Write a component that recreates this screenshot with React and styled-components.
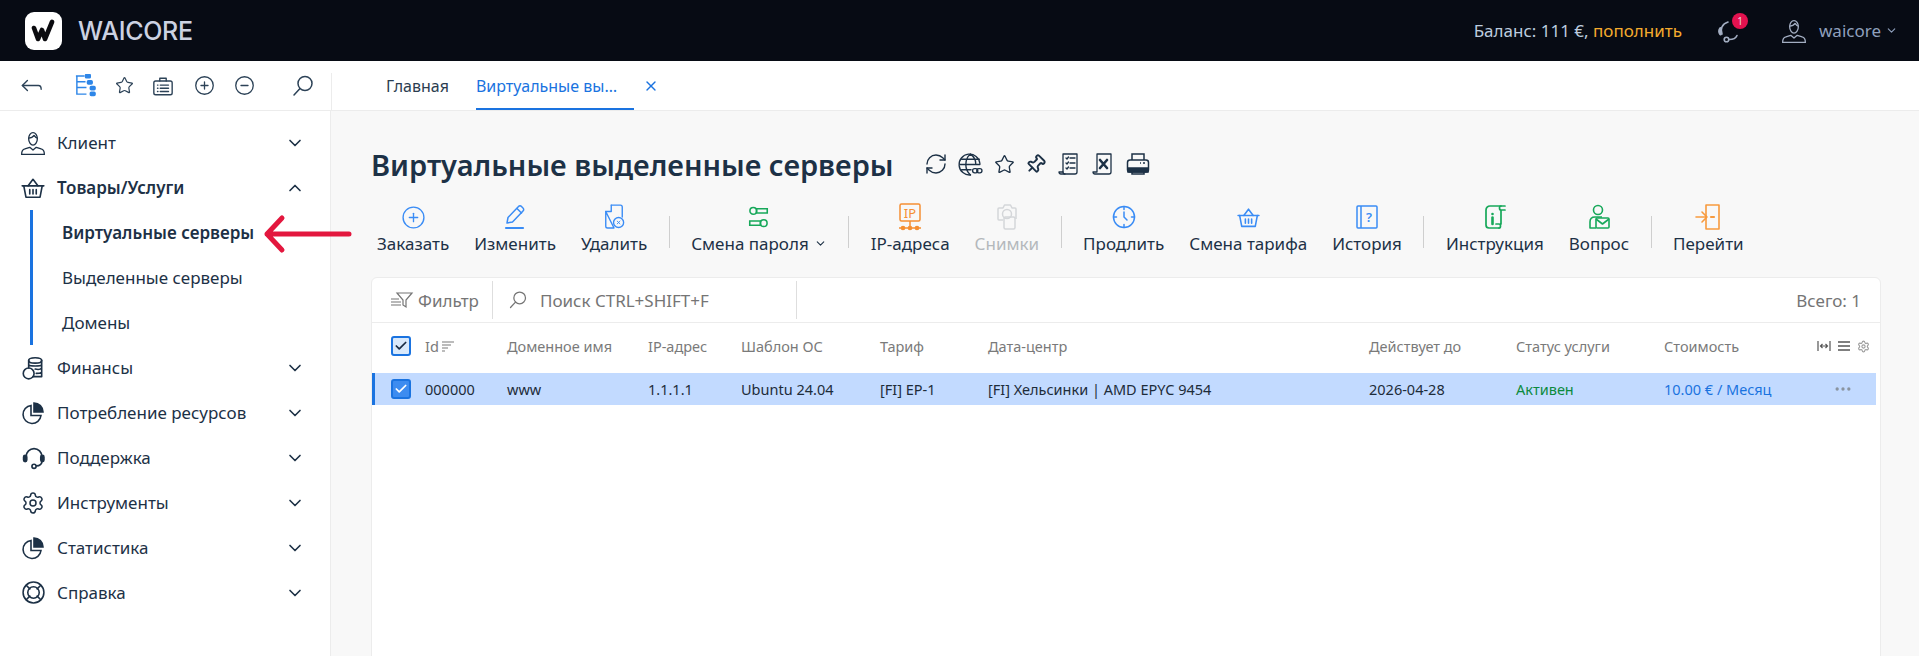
import React from 'react';
import styled, { createGlobalStyle } from 'styled-components';
import { ChevronDown, ChevronUp, X, RefreshCw, Star, Pin, PlusCircle, MinusCircle, Settings, MoreHorizontal, Check } from 'lucide-react';

const GlobalStyle = createGlobalStyle`
  html, body { margin: 0; padding: 0; background: #fff; }
  body { font-family: "Noto Sans", "Open Sans", sans-serif; color: #1d3146; }
  * { box-sizing: border-box; }
`;

const Page = styled.div`
  width: 1919px;
  height: 656px;
  overflow: hidden;
  display: flex;
  flex-direction: column;
  position: relative;
`;

const Header = styled.header`
  height: 61px;
  background: #070b14;
  display: flex;
  align-items: center;
  padding: 0 21px 0 25px;
`;

const LogoBox = styled.div`
  width: 37px;
  height: 38px;
  border-radius: 9px;
  background: #fff;
  display: flex;
  align-items: center;
  justify-content: center;
`;

const Brand = styled.div`
  margin-left: 16px;
  color: #ccd2e2;
  font-family: "Inter", sans-serif;
  font-size: 25px;
  font-weight: 500;
  letter-spacing: -0.3px;
`;

const Balance = styled.div`
  margin-left: auto;
  color: #bcccdf;
  font-size: 17px;
`;

const TopUp = styled.span`
  color: #f5ab2e;
`;

const HeaderIcon = styled.div`
  position: relative;
  margin-left: ${p => p.$gap}px;
  display: flex;
  color: #a3aec2;
`;

const Badge = styled.span`
  position: absolute;
  top: -6px;
  right: -7px;
  width: 16px;
  height: 16px;
  border-radius: 50%;
  background: #e3124f;
  color: #e8d6de;
  font-size: 10px;
  line-height: 16px;
  text-align: center;
`;

const UserName = styled.div`
  margin-left: 12px;
  color: #8fa0bd;
  font-size: 17px;
`;

const UserCaret = styled.span`
  display: flex;
  margin-left: 4px;
  color: #8fa0bd;
`;

const NavBar = styled.div`
  height: 50px;
  display: flex;
  border-bottom: 1px solid #ececec;
`;

const NavTools = styled.div`
  width: 331px;
  flex: none;
  display: flex;
  align-items: center;
  padding-left: 21px;
  color: #2c4257;
`;

const NavTool = styled.span`
  display: flex;
  margin-left: ${p => p.$gap || 0}px;
`;

const Tabs = styled.div`
  display: flex;
  align-items: stretch;
  border-left: 1px solid #ececec;
  margin-top: 12px;
  padding-left: 54px;
  font-size: 16px;
`;

const Tab = styled.div`
  display: flex;
  align-items: center;
  padding-bottom: 9px;
  margin-right: ${p => (p.$active ? 9 : 27)}px;
  color: ${p => (p.$active ? '#1a73e0' : '#2b3d50')};
  border-bottom: 2px solid ${p => (p.$active ? '#1a73e0' : 'transparent')};
`;

const TabLabel = styled.span`
  width: 158px;
  white-space: nowrap;
`;

const CloseTab = styled.span`
  display: flex;
  align-items: center;
  padding-bottom: 11px;
  color: #1a73e0;
`;

const Body = styled.div`
  flex: 1;
  display: flex;
  min-height: 0;
`;

const Sidebar = styled.aside`
  width: 331px;
  flex: none;
  border-right: 1px solid #ececec;
  padding-top: 9px;
  background: #fff;
`;

const MenuRow = styled.div`
  height: 45px;
  display: flex;
  align-items: center;
  padding: 0 25px 0 20px;
  font-size: 17px;
  font-weight: ${p => (p.$open ? 600 : 400)};
  color: #1d3146;
`;

const MenuIcon = styled.span`
  width: 26px;
  height: 26px;
  display: flex;
  align-items: center;
  justify-content: center;
  margin-right: 11px;
`;

const MenuChevron = styled.span`
  margin-left: auto;
  display: flex;
`;

const SubMenu = styled.div`
  margin-left: 30px;
  border-left: 3px solid #1a73e0;
`;

const SubRow = styled.div`
  height: 45px;
  display: flex;
  align-items: center;
  padding-left: 29px;
  font-size: 17px;
  font-weight: ${p => (p.$active ? 600 : 400)};
  color: #1d3146;
`;

const Content = styled.main`
  flex: 1;
  background: #f8f8f8;
  padding: 28px 0 0 40px;
  min-width: 0;
`;

const TitleRow = styled.div`
  display: flex;
  align-items: center;
  height: 50px;
  color: #1d3146;
`;

const Title = styled.h1`
  margin: 0 30px 0 0;
  font-size: 29px;
  font-weight: 600;
  color: #1d3146;
`;

const TitleIcons = styled.div`
  display: flex;
  align-items: center;
  gap: 10.5px;
`;

const PinIcon = styled(Pin)`
  transform: rotate(45deg);
`;

const Actions = styled.div`
  display: flex;
  align-items: flex-start;
  height: 75px;
  margin: 13px 0 0 -6.5px;
`;

const Action = styled.div`
  display: flex;
  flex-direction: column;
  align-items: center;
  padding: 0 12.5px;
  font-size: 17px;
  white-space: nowrap;
  color: ${p => (p.$off ? '#b4b8bc' : '#1d3146')};
`;

const ActionIcon = styled.span`
  height: 30px;
  display: flex;
  align-items: center;
  color: ${p => p.$c};
`;

const ActionLabel = styled.span`
  display: flex;
  align-items: center;
  gap: 5px;
`;

const Divider = styled.span`
  width: 1px;
  height: 32px;
  margin: 14px 9px 0;
  background: #cfcfcf;
`;

const Card = styled.section`
  width: 1510px;
  height: 400px;
  background: #fff;
  border: 1px solid #ececec;
  border-radius: 6px;
`;

const FilterBar = styled.div`
  height: 45px;
  display: flex;
  align-items: center;
  border-bottom: 1px solid #ececec;
  color: #757575;
  font-size: 17px;
`;

const FilterBtn = styled.div`
  width: 121px;
  height: 38px;
  display: flex;
  align-items: center;
  gap: 4px;
  padding-left: 18px;
  border-right: 1px solid #dedede;
`;

const SearchBox = styled.div`
  width: 304px;
  height: 38px;
  display: flex;
  align-items: center;
  gap: 12px;
  padding-left: 15px;
  border-right: 1px solid #dedede;
`;

const Total = styled.div`
  margin-left: auto;
  padding-right: 19px;
`;

const gridCols = '53px 82px 141px 93px 139px 108px 381px 147px 148px 153px 1fr';

const TableHead = styled.div`
  height: 50px;
  padding-bottom: 4px;
  display: grid;
  grid-template-columns: ${gridCols};
  align-items: center;
  font-size: 14.5px;
  color: #7a7a7a;
`;

const TableRow = styled.div`
  height: 32px;
  margin-right: 4px;
  display: grid;
  grid-template-columns: ${gridCols};
  align-items: center;
  box-shadow: inset 3px 0 0 #1a73e0;
  background: #c2daff;
  font-size: 14.5px;
  color: #1d2c3a;
`;

const CheckCell = styled.span`
  display: flex;
  justify-content: center;
  padding-left: 4px;
`;

const CheckBox = styled.span`
  width: 20px;
  height: 20px;
  border-radius: 3px;
  border: 2px solid #1a73e0;
  background: ${p => (p.$row ? '#3d8cf0' : '#d9e9fb')};
  color: ${p => (p.$row ? '#fff' : '#1a2c44')};
  display: flex;
  align-items: center;
  justify-content: center;
`;

const IdHead = styled.span`
  display: flex;
  align-items: center;
  gap: 2px;
`;

const ColumnTools = styled.span`
  display: flex;
  align-items: center;
  gap: 6px;
  color: #555;
`;

const GearTool = styled.span`
  display: flex;
  color: #9a9a9a;
`;

const Status = styled.span`
  color: #0c8a3e;
`;

const Price = styled.span`
  color: #1a73e0;
`;

const RowMore = styled.span`
  display: flex;
  padding-left: 16px;
  color: #8a94a0;
`;

const ArrowMark = styled.svg`
  position: absolute;
  left: 263px;
  top: 213px;
`;

const Line = ({ size = 24, sw = 1.5, children }) => (
  <svg width={size} height={size} viewBox="0 0 24 24" fill="none" stroke="currentColor" strokeWidth={sw} strokeLinecap="round" strokeLinejoin="round">
    {children}
  </svg>
);

const Logo = () => (
  <svg width="25" height="24" viewBox="0 0 25 24" fill="none" stroke="#0b0b0f" strokeLinecap="round" strokeLinejoin="round">
    <path d="M3 9 L7 20 L11 11 L14 20 L21 3" strokeWidth="4.6" />
  </svg>
);

const UserBust = ({ size = 26 }) => (
  <Line size={size} sw={1.2}>
    <path d="M8 8c0-3 1.800-5.500 4-5.500S16 5 16 8s-1.800 6-4 6-4-3-4-6z" />
    <path d="M8 7.500c2 0 4-1 5-2.500 1 1.500 2 2.500 3 2.500" />
    <path d="M1.500 22.500c0-3 1-4.500 3-5l4.500-1.500 3 2.500 3-2.500 4.500 1.500c2 .5 3 2 3 5z" />
  </Line>
);

const Basket = ({ size = 26 }) => (
  <Line size={size} sw={1.5}>
    <path d="M2 10h20" /><path d="M3.500 10l2 10.500h13l2-10.500" />
    <path d="M7.500 10L12 4l4.500 6" /><path d="M9 13.500v4M12 13.500v4M15 13.500v4" />
  </Line>
);

const Coins = () => (
  <Line size={26} sw={1.5}>
    <ellipse cx="14" cy="5" rx="6" ry="2.500" />
    <path d="M8 5v7M20 5v15h-8M8 9c1 1.500 11 1.500 12 0M14 13c2 .5 5 .3 6-1M15 17c2 0 4-.3 5-1" />
    <circle cx="8" cy="17" r="5" />
  </Line>
);

const PieIcon = () => (
  <svg width="24" height="24" viewBox="0 0 24 24" fill="none" stroke="#1d3146" strokeWidth="1.600">
    <path d="M10 4.500a9 9 0 1 0 10 10H10z" />
    <path d="M13 2a9 9 0 0 1 9 9h-9z" fill="#1d3146" />
  </svg>
);

const Headset = () => (
  <Line size={25} sw={1.6}>
    <path d="M5 11a7.500 7.500 0 0 1 15 0v5c0 2-2 4-5 4" />
    <rect x="2.500" y="10" width="3" height="6" rx="1.500" fill="currentColor" />
    <rect x="19" y="10" width="3" height="6" rx="1.500" fill="currentColor" />
    <circle cx="12.500" cy="20.500" r="2" />
  </Line>
);

const HeaderHeadset = () => (
  <Line size={24} sw={1.6}>
    <path d="M5 15c-2-5 0-10 6-12" />
    <path d="M3.500 9.500c-1 1.500-1 4 0 5.500" strokeWidth="3" />
    <path d="M12 20.500c4 0 7-1.500 8-4" />
    <circle cx="9.500" cy="20.500" r="2.300" />
  </Line>
);

const Lifebuoy = () => (
  <Line size={25} sw={1.5}>
    <circle cx="12" cy="12" r="10" /><circle cx="12" cy="12" r="5.500" />
    <path d="M5 5l3.500 3.500M19 5l-3.500 3.500M5 19l3.500-3.500M19 19l-3.500-3.500" />
  </Line>
);

const Tree = () => (
  <svg width="23" height="23" viewBox="0 0 24 24" fill="none" stroke="#2e86e8" strokeWidth="1.500">
    <path d="M2 2h9M3 2v19h10M3 8h9M3 14h10" />
    <rect x="12" y="0.500" width="5" height="3.500" rx="1" fill="#2e86e8" />
    <rect x="14" y="7" width="5" height="3.500" rx="1" fill="#2e86e8" />
    <rect x="17" y="13" width="5" height="3.500" rx="1" fill="#2e86e8" />
    <rect x="17" y="19" width="5" height="3.500" rx="1" fill="#2e86e8" />
  </svg>
);

const Briefcase = () => (
  <Line size={22} sw={1.5}>
    <rect x="2" y="6.500" width="20" height="15" rx="2" /><path d="M8.500 6.500V3.500h7v3" />
    <path d="M6 11h.5M9 11h9M6 14.500h.5M9 14.500h9M6 18h.5M9 18h9" />
  </Line>
);

const BackArrow = () => (
  <svg width="22" height="16" viewBox="0 0 24 16" fill="none" stroke="currentColor" strokeWidth="1.500" strokeLinecap="round" strokeLinejoin="round">
    <path d="M7 2L1.500 7.500 7 13" /><path d="M1.500 7.500H19c2 0 3 1.500 3 4" />
  </svg>
);

const Magnifier = ({ size = 24 }) => (
  <Line size={size} sw={1.5}>
    <circle cx="14" cy="9.500" r="7" /><path d="M9 14.500L3 21" />
  </Line>
);

const GlobeLink = () => (
  <Line size={25} sw={1.3}>
    <path d="M21 11a10 10 0 1 0-9 11" />
    <path d="M2 12h19M12 2c-6 5-6 15 0 20M12 2c4 3 5 6 5 9M3.500 7h17M3.500 17h9" />
    <rect x="14" y="16" width="5" height="4" rx="2" /><rect x="18" y="16" width="5" height="4" rx="2" />
  </Line>
);

const ScrollList = () => (
  <Line size={24} sw={1.3}>
    <path d="M6 2h14v18c0 1-1 2-2 2H4c-1.500 0-2-1-2-2h4V2z" /><path d="M6 20c0 1 1 2 2 2" />
    <path d="M9 6l1 1 1.500-2M13 6h5M9 11l1 1 1.500-2M13 11h5M9 16l1 1 1.500-2M13 16h5" />
  </Line>
);

const ScrollExcel = () => (
  <Line size={24} sw={1.3}>
    <path d="M6 2h14v18c0 1-1 2-2 2H4c-1.500 0-2-1-2-2h4V2z" />
    <path d="M9 8l7 8M16 8l-7 8" strokeWidth="2.600" />
  </Line>
);

const Printer = () => (
  <svg width="24" height="24" viewBox="0 0 24 24" fill="none" stroke="currentColor" strokeWidth="1.500">
    <path d="M6 8V2h12v6" /><rect x="1.500" y="8" width="21" height="12" rx="2.500" />
    <path d="M2 16h20v4H2z" fill="currentColor" /><path d="M6 20v2h12v-2" /><path d="M14 11h1M17 11h2" />
  </svg>
);

const PencilLine = () => (
  <svg width="26" height="28" viewBox="0 0 26 28" fill="none" stroke="currentColor" strokeWidth="1.500" strokeLinecap="round" strokeLinejoin="round">
    <path d="M5 20l1-5.500L16.500 3.500a2 2 0 0 1 3 0l1.500 1.500a2 2 0 0 1 0 3L10.500 19z" />
    <path d="M15 5.500l4.500 4.500" />
    <path d="M4 25h17" strokeWidth="2.200" />
  </svg>
);

const FileCross = () => (
  <svg width="22" height="28" viewBox="0 0 24 30" fill="none" stroke="currentColor" strokeWidth="1.500" strokeLinecap="round" strokeLinejoin="round">
    <path d="M9 2h10a2 2 0 0 1 2 2v11M12 27H5a2 2 0 0 1-2-2V9z" />
    <path d="M9 2v7H3" />
    <circle cx="17" cy="21" r="5.500" />
    <path d="M15.500 19.500l3 3M18.500 19.500l-3 3" strokeWidth="1" />
  </svg>
);

const PassKey = () => (
  <svg width="21" height="26" viewBox="0 0 24 28" fill="none" stroke="#17a85a" strokeWidth="1.800">
    <circle cx="6" cy="7" r="3.800" />
    <path d="M9.800 4.500h12.200v5h-12.200z" />
    <circle cx="18" cy="21" r="3.800" />
    <path d="M14.200 18.500h-12.200v5h12.200z" />
  </svg>
);

const IpBadge = () => (
  <svg width="24" height="28" viewBox="0 0 24 28" fill="none" stroke="#f58f33" strokeWidth="1.500">
    <rect x="2" y="1" width="20" height="17" rx="1.500" />
    <text x="12" y="14.500" textAnchor="middle" fontFamily="Noto Sans" fontSize="13" fill="#f58f33" stroke="none">IP</text>
    <path d="M12 18v7M1 25h22" />
    <circle cx="5" cy="25" r="1.600" fill="#f58f33" />
    <circle cx="12" cy="25" r="1.600" fill="#f58f33" />
    <circle cx="19" cy="25" r="1.600" fill="#f58f33" />
  </svg>
);

const SnapIcon = () => (
  <svg width="24" height="28" viewBox="0 0 24 28" fill="none" stroke="#d4d6d9" strokeWidth="1.500" strokeLinejoin="round">
    <path d="M8 17H4a1 1 0 0 1-1-1V6a1 1 0 0 1 1-1h4l1.500-3h6L17 5h3a1 1 0 0 1 1 1v10" />
    <circle cx="12" cy="11" r="4.500" />
    <rect x="9" y="14" width="11" height="12" rx="1.500" />
  </svg>
);

const ClockIcon = () => (
  <svg width="26" height="26" viewBox="0 0 26 26" fill="none" stroke="currentColor" strokeWidth="1.500" strokeLinecap="round">
    <circle cx="13" cy="13" r="10.500" />
    <path d="M13 2.500v3M13 20.500v3M2.500 13h3M20.500 13h3" />
    <path d="M13 8v5l3 3" />
  </svg>
);

const BookQ = () => (
  <svg width="24" height="26" viewBox="0 0 24 26" fill="none" stroke="currentColor" strokeWidth="1.500">
    <rect x="2" y="2" width="20" height="22" rx="1" /><path d="M6 2v22" />
    <text x="14" y="18" textAnchor="middle" fontFamily="Noto Sans" fontSize="13" fontWeight="600" fill="currentColor" stroke="none">?</text>
  </svg>
);

const ScrollGuide = () => (
  <svg width="26" height="28" viewBox="0 0 26 28" fill="none" stroke="#17a85a" strokeWidth="1.700" strokeLinecap="round" strokeLinejoin="round">
    <path d="M23 3H8a4 4 0 0 0-4 4v15a3 3 0 0 0 3 3h10" />
    <path d="M19 3c-2 0-2 4 0 4h4M17 25c2 0 2-4 0-4h-3M19 7v14" />
    <circle cx="10.500" cy="11" r="1.300" fill="#17a85a" stroke="none" />
    <path d="M10.500 14.500V21" strokeWidth="2.600" />
  </svg>
);

const Question = () => (
  <svg width="24" height="28" viewBox="0 0 24 28" fill="none" stroke="#17a85a" strokeWidth="1.600" strokeLinejoin="round">
    <circle cx="11" cy="7" r="4.500" />
    <path d="M9 25H3v-6c0-3 2-5 5-5h7" />
    <rect x="9" y="15" width="13" height="10" rx="1" />
    <path d="M9 16l6.500 5 6.500-5" />
  </svg>
);

const GoDoor = () => (
  <svg width="28" height="28" viewBox="0 0 28 28" fill="none" stroke="#f79a3e" strokeWidth="1.600" strokeLinecap="round" strokeLinejoin="round">
    <rect x="12" y="2" width="13" height="24" />
    <path d="M2 14h10M8 9l5 5-5 5" />
    <path d="M17 14h3" strokeWidth="2.200" />
  </svg>
);

const menuTop = [{ label: 'Клиент', icon: <UserBust /> }];

const menuBottom = [
  { label: 'Финансы', icon: <Coins /> },
  { label: 'Потребление ресурсов', icon: <PieIcon /> },
  { label: 'Поддержка', icon: <Headset /> },
  { label: 'Инструменты', icon: <Settings size={24} strokeWidth={1.5} /> },
  { label: 'Статистика', icon: <PieIcon /> },
  { label: 'Справка', icon: <Lifebuoy /> },
];

const blue = '#3a8cf5';

const actions = [
  [
    { label: 'Заказать', icon: <PlusCircle size={25} strokeWidth={1.3} />, c: blue },
    { label: 'Изменить', icon: <PencilLine />, c: blue },
    { label: 'Удалить', icon: <FileCross />, c: blue },
  ],
  [{ label: 'Смена пароля', icon: <PassKey />, caret: true }],
  [
    { label: 'IP-адреса', icon: <IpBadge /> },
    { label: 'Снимки', icon: <SnapIcon />, off: true },
  ],
  [
    { label: 'Продлить', icon: <ClockIcon />, c: blue },
    { label: 'Смена тарифа', icon: <Basket size={25} />, c: blue },
    { label: 'История', icon: <BookQ />, c: blue },
  ],
  [
    { label: 'Инструкция', icon: <ScrollGuide /> },
    { label: 'Вопрос', icon: <Question /> },
  ],
  [{ label: 'Перейти', icon: <GoDoor /> }],
];

const heads = ['Доменное имя', 'IP-адрес', 'Шаблон ОС', 'Тариф', 'Дата-центр', 'Действует до', 'Статус услуги', 'Стоимость'];

function App() {
  return (
    <Page>
      <GlobalStyle />
      <Header>
        <LogoBox><Logo /></LogoBox>
        <Brand>WAICORE</Brand>
        <Balance>Баланс: 111 €, <TopUp>пополнить</TopUp></Balance>
        <HeaderIcon $gap={35}>
          <HeaderHeadset />
          <Badge>1</Badge>
        </HeaderIcon>
        <HeaderIcon $gap={40}><UserBust /></HeaderIcon>
        <UserName>waicore</UserName>
        <UserCaret><ChevronDown size={13} /></UserCaret>
      </Header>

      <NavBar>
        <NavTools>
          <NavTool><BackArrow /></NavTool>
          <NavTool $gap={31}><Tree /></NavTool>
          <NavTool $gap={18}><Star size={19} strokeWidth={1.5} /></NavTool>
          <NavTool $gap={18}><Briefcase /></NavTool>
          <NavTool $gap={20}><PlusCircle size={21} strokeWidth={1.5} /></NavTool>
          <NavTool $gap={19}><MinusCircle size={21} strokeWidth={1.5} /></NavTool>
          <NavTool $gap={36}><Magnifier /></NavTool>
        </NavTools>
        <Tabs>
          <Tab>Главная</Tab>
          <Tab $active><TabLabel>Виртуальные вы…</TabLabel></Tab>
          <CloseTab><X size={16} /></CloseTab>
        </Tabs>
      </NavBar>

      <Body>
        <Sidebar>
          {menuTop.map(m => (
            <MenuRow key={m.label}>
              <MenuIcon>{m.icon}</MenuIcon>{m.label}
              <MenuChevron><ChevronDown size={20} /></MenuChevron>
            </MenuRow>
          ))}
          <MenuRow $open>
            <MenuIcon><Basket /></MenuIcon>Товары/Услуги
            <MenuChevron><ChevronUp size={20} /></MenuChevron>
          </MenuRow>
          <SubMenu>
            <SubRow $active>Виртуальные серверы</SubRow>
            <SubRow>Выделенные серверы</SubRow>
            <SubRow>Домены</SubRow>
          </SubMenu>
          {menuBottom.map(m => (
            <MenuRow key={m.label}>
              <MenuIcon>{m.icon}</MenuIcon>{m.label}
              <MenuChevron><ChevronDown size={20} /></MenuChevron>
            </MenuRow>
          ))}
        </Sidebar>

        <Content>
          <TitleRow>
            <Title>Виртуальные выделенные серверы</Title>
            <TitleIcons>
              <RefreshCw size={24} strokeWidth={1.4} />
              <GlobeLink />
              <Star size={21} strokeWidth={1.5} />
              <PinIcon size={21} strokeWidth={2.2} />
              <ScrollList />
              <ScrollExcel />
              <Printer />
            </TitleIcons>
          </TitleRow>

          <Actions>
            {actions.map((group, i) => (
              <React.Fragment key={i}>
                {i > 0 && <Divider />}
                {group.map(a => (
                  <Action key={a.label} $off={a.off}>
                    <ActionIcon $c={a.c}>{a.icon}</ActionIcon>
                    <ActionLabel>
                      {a.label}
                      {a.caret && <ChevronDown size={13} />}
                    </ActionLabel>
                  </Action>
                ))}
              </React.Fragment>
            ))}
          </Actions>

          <Card>
            <FilterBar>
              <FilterBtn>
                <svg width="24" height="20" viewBox="0 0 24 20" fill="none" stroke="currentColor" strokeWidth="1.200">
                  <path d="M7 3h15l-6 7v7l-3-2v-5z" /><path d="M1 9h8M1 12h10M1 15h10" />
                </svg>
                Фильтр
              </FilterBtn>
              <SearchBox><Magnifier size={20} />Поиск CTRL+SHIFT+F</SearchBox>
              <Total>Всего: 1</Total>
            </FilterBar>
            <TableHead>
              <CheckCell><CheckBox><Check size={14} strokeWidth={3} /></CheckBox></CheckCell>
              <IdHead>
                Id
                <svg width="14" height="12" viewBox="0 0 14 12" stroke="currentColor" strokeWidth="1.200">
                  <path d="M1 2h12M1 5h9M1 8h6M1 11h3" />
                </svg>
              </IdHead>
              {heads.map(h => <span key={h}>{h}</span>)}
              <ColumnTools>
                <svg width="14" height="12" viewBox="0 0 14 12" fill="none" stroke="currentColor" strokeWidth="1.200">
                  <path d="M1 1v10M13 1v10M3.500 6h7M8.500 4l2 2-2 2M5.500 4l-2 2 2 2" />
                </svg>
                <svg width="14" height="12" viewBox="0 0 14 12" stroke="currentColor" strokeWidth="1.500">
                  <path d="M1 2h12M1 6h12M1 10h12" />
                </svg>
                <GearTool><Settings size={13} /></GearTool>
              </ColumnTools>
            </TableHead>
            <TableRow>
              <CheckCell><CheckBox $row><Check size={14} strokeWidth={3} /></CheckBox></CheckCell>
              <span>000000</span>
              <span>www</span>
              <span>1.1.1.1</span>
              <span>Ubuntu 24.04</span>
              <span>[FI] EP-1</span>
              <span>[FI] Хельсинки | AMD EPYC 9454</span>
              <span>2026-04-28</span>
              <Status>Активен</Status>
              <Price>10.00 € / Месяц</Price>
              <RowMore><MoreHorizontal size={20} /></RowMore>
            </TableRow>
          </Card>
        </Content>
      </Body>

      <ArrowMark width="90" height="42" viewBox="0 0 90 42" fill="none" stroke="#e3173e" strokeWidth="5" strokeLinecap="round" strokeLinejoin="round">
        <path d="M4 21h82M19 5L4 21l15 16" />
      </ArrowMark>
    </Page>
  );
}

export default App;
